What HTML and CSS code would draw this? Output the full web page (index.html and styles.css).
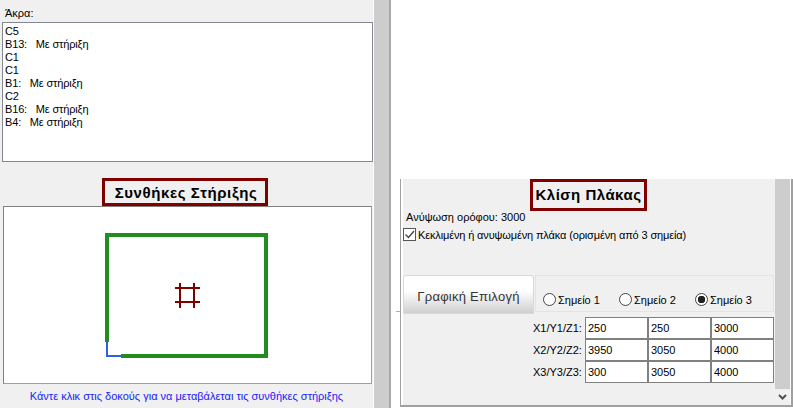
FILE: index.html
```html
<!DOCTYPE html>
<html lang="en">
<head>
    <meta charset="UTF-8">
    <meta name="viewport" content="width=device-width, initial-scale=1.0">
    <title>Συνθήκες Στήριξης</title>
    <link rel="stylesheet" href="styles.css">
</head>
<body>
    <div class="left-pane">
        <div class="list-label">Άκρα:</div>
        <div class="end-list">
            <div>C5</div>
            <div>B13:   Με στήριξη</div>
            <div>C1</div>
            <div>C1</div>
            <div>B1:   Με στήριξη</div>
            <div>C2</div>
            <div>B16:   Με στήριξη</div>
            <div>B4:   Με στήριξη</div>
        </div>
        <h2 class="box-title support-title">Συνθήκες Στήριξης</h2>
        <div class="drawing">
            <svg width="367" height="176" viewBox="0 0 367 176">
                <g transform="translate(-4 -208)">
                    <path d="M107 342V357H121" fill="none" stroke="#2a62e2" stroke-width="2"/>
                    <path d="M107 343V236H266V357H121" fill="none" stroke="#228b22" stroke-width="4"/>
                    <path d="M180 284V309M194 284V309M175 289H200M175 303H200" fill="none" stroke="#800000" stroke-width="2"/>
                </g>
            </svg>
        </div>
        <div class="drawing-note">Κάντε κλικ στις δοκούς για να μεταβάλεται τις συνθήκες στήριξης</div>
    </div>
    <div class="scrollbar left-scroll"></div>
    <div class="right-area">
        <div class="tick"></div>
        <div class="slab-panel">
            <div class="slab-content">
                <h2 class="box-title slope-title">Κλίση Πλάκας</h2>
                <div class="height-line">Ανύψωση ορόφου: 3000</div>
                <div class="check-line">
                    <span class="check-box">
                        <svg width="11" height="11" viewBox="0 0 11 11"><path d="M1.5 5.5L4.5 8.5L10 2" fill="none" stroke="#444" stroke-width="1.4"/></svg>
                    </span>
                    <span class="check-text">Κεκλιμένη ή ανυψωμένη πλάκα (ορισμένη από 3 σημεία)</span>
                </div>
                <div class="pick-row">
                    <button class="pick-btn">Γραφική Επιλογή</button>
                    <div class="radio-group">
                        <span class="radio-item"><span class="radio"></span>Σημείο 1</span>
                        <span class="radio-item"><span class="radio"></span>Σημείο 2</span>
                        <span class="radio-item"><span class="radio checked"></span>Σημείο 3</span>
                    </div>
                </div>
                <div class="coords">
                    <div class="coord-labels">
                        <div>X1/Y1/Z1:</div>
                        <div>X2/Y2/Z2:</div>
                        <div>X3/Y3/Z3:</div>
                    </div>
                    <div class="coord-grid">
                        <div>250</div><div>250</div><div>3000</div>
                        <div>3950</div><div>3050</div><div>4000</div>
                        <div>300</div><div>3050</div><div>4000</div>
                    </div>
                </div>
            </div>
            <div class="scrollbar right-scroll">
                <div class="scroll-thumb"></div>
                <div class="scroll-arrow">
                    <svg width="9" height="7" viewBox="0 0 9 7"><path d="M1 1L4.5 4.5L8 1" fill="none" stroke="#505050" stroke-width="2"/></svg>
                </div>
            </div>
        </div>
    </div>
</body>
</html>
```

FILE: styles.css
```css
html, body {
    margin: 0;
    padding: 0;
}
body {
    width: 793px;
    height: 408px;
    overflow: hidden;
    display: flex;
    background-color: #fff;
    font-family: "Liberation Sans", Arial, sans-serif;
    font-size: 11px;
    color: #000;
}
.left-pane {
    width: 373px;
    height: 408px;
    background-color: #f0f0f0;
    display: flex;
    flex-direction: column;
    flex-shrink: 0;
}
.list-label {
    height: 22px;
    line-height: 27px;
    padding-left: 5px;
}
.end-list {
    width: 369px;
    height: 139px;
    margin-left: 2px;
    padding-top: 2px;
    border: 1px solid #828790;
    background-color: #fff;
    line-height: 13px;
    letter-spacing: -0.15px;
}
.end-list div {
    white-space: pre;
    padding-left: 2px;
}
.box-title {
    margin: 0;
    box-sizing: border-box;
    border: 3px solid #800000;
    font-size: 15px;
    font-weight: bold;
    text-align: center;
    letter-spacing: 0.6px;
}
.support-title {
    width: 166px;
    height: 28px;
    line-height: 24px;
    margin: 16px 0 0 102px;
    padding-left: 2px;
}
.drawing {
    width: 369px;
    height: 178px;
    margin-left: 3px;
    box-sizing: border-box;
    background-color: #fff;
    border: 1px solid #a0a0a0;
    border-top-color: #808080;
    border-left-color: #808080;
}
.drawing svg {
    display: block;
}
.drawing-note {
    text-align: center;
    color: #1a1aff;
    line-height: 24px;
}
.scrollbar {
    background-color: #cdcdcd;
    flex-shrink: 0;
}
.left-scroll {
    width: 15px;
    height: 408px;
    margin-left: 1px;
    border-right: 2px solid #a8a8a8;
}
.right-area {
    position: relative;
    flex: 1;
    padding: 179px 0 0 9px;
    box-sizing: border-box;
    height: 408px;
}
.tick {
    position: absolute;
    left: 5px;
    top: 311px;
    width: 4px;
    height: 1px;
    background-color: #b0b0b0;
}
.slab-panel {
    display: flex;
    height: 228px;
    box-sizing: border-box;
    border-left: 1px solid #a0a0a0;
    border-right: 2px solid #a0a0a0;
    border-bottom: 2px solid #a0a0a0;
    padding-left: 2px;
}
.slab-content {
    width: 372px;
    background-color: #f0f0f0;
}
.slope-title {
    width: 117px;
    height: 32px;
    line-height: 26px;
    margin-left: 127px;
    letter-spacing: 0.5px;
}
.height-line {
    height: 17px;
    line-height: 12px;
    padding-left: 3px;
}
.check-line {
    display: flex;
    align-items: center;
    gap: 2px;
    height: 13px;
}
.check-box {
    width: 11px;
    height: 11px;
    border: 1px solid #555;
    background-color: #fff;
    flex-shrink: 0;
}
.check-box svg {
    display: block;
}
.check-text {
    letter-spacing: -0.14px;
}
.pick-row {
    display: flex;
    margin-top: 34px;
    height: 39px;
}
.pick-btn {
    width: 131px;
    height: 39px;
    border: 1px solid #d8d8d8;
    border-radius: 3px 3px 0 0;
    background: linear-gradient(#fff 40%, #cfcfcf);
    font-family: "Liberation Sans", Arial, sans-serif;
    font-size: 13px;
    letter-spacing: 0.25px;
    color: #333;
    padding: 3px 0 0 0;
}
.radio-group {
    margin-left: 1px;
    width: 239px;
    height: 37px;
    box-sizing: border-box;
    border: 1px solid #e4e4e4;
    display: flex;
    padding: 17px 0 0 7px;
    gap: 20px;
}
.radio-item {
    display: flex;
    align-items: center;
    gap: 2px;
    width: 56px;
    height: 13px;
    white-space: nowrap;
}
.radio {
    width: 13px;
    height: 13px;
    box-sizing: border-box;
    border: 1px solid #444;
    border-radius: 50%;
    background-color: #fff;
    flex-shrink: 0;
}
.radio.checked {
    background: radial-gradient(circle, #222 0 3.5px, #fff 4px);
}
.coords {
    display: flex;
    justify-content: flex-end;
    margin-top: 3px;
}
.coord-labels {
    width: 52px;
    line-height: 22px;
}
.coord-grid {
    display: grid;
    grid-template-columns: 61px 61px 61px;
    grid-auto-rows: 20px;
    gap: 2px;
    width: 189px;
    height: 66px;
    box-sizing: border-box;
    border: 1px solid #808080;
    background-color: #808080;
    margin-right: 1px;
}
.coord-grid div {
    background-color: #fff;
    line-height: 20px;
    padding-left: 2px;
}
.right-scroll {
    width: 15px;
    height: 226px;
    background-color: #f0f0f0;
    display: flex;
    flex-direction: column;
}
.scroll-thumb {
    height: 210px;
    background-color: #cdcdcd;
}
.scroll-arrow {
    flex: 1;
    display: flex;
    align-items: center;
    justify-content: center;
}
.scroll-arrow svg {
    display: block;
}
```
